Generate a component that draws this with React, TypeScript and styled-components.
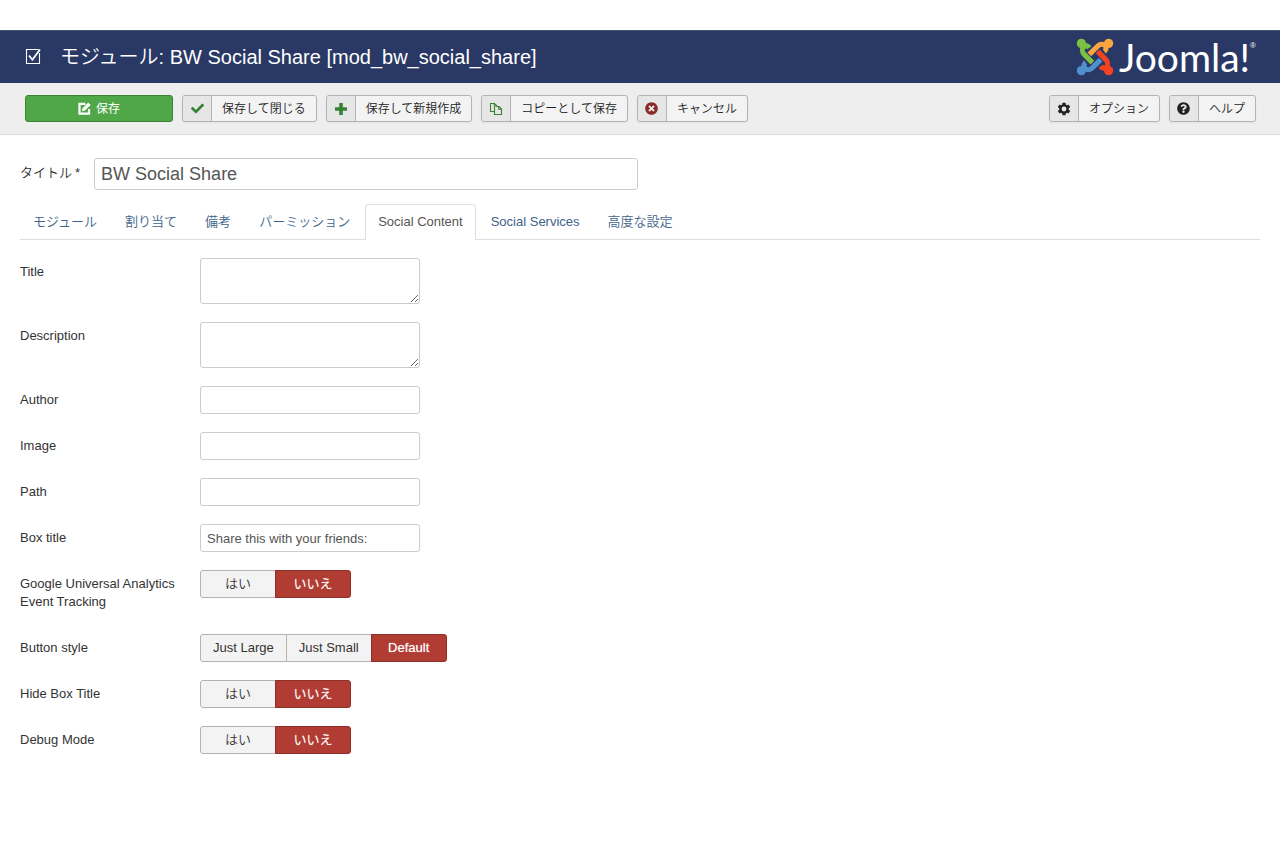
import React from "react";
import styled, { createGlobalStyle, css } from "styled-components";
import { FaCheck, FaTimesCircle, FaQuestionCircle } from "react-icons/fa";

const GlobalStyle = createGlobalStyle`
  *, *::before, *::after { box-sizing: border-box; }
  body {
    margin: 0;
    background: #fff;
    color: #333;
    font-family: "Liberation Sans", "Noto Sans CJK JP", sans-serif;
    font-size: 13px;
    font-weight: 350;
    line-height: 18px;
  }
  button, input, textarea { font: inherit; margin: 0; }
`;

const Page = styled.div`
  padding-top: 30px;
`;

const Header = styled.header`
  display: flex;
  align-items: center;
  height: 53px;
  padding: 0 24px;
  background: #293864;
  border-top: 1px solid #44516f;
  color: #fff;
`;

const PageTitle = styled.h1`
  display: flex;
  flex: 1;
  align-items: center;
  gap: 18px;
  margin: 0;
  font-size: 20px;
  font-weight: 350;
  line-height: 40px;
`;

const Brand = styled.a`
  display: flex;
  align-items: center;
  gap: 5px;
  color: #fff;
  text-decoration: none;
`;

const BrandName = styled.span`
  font-family: Lato, sans-serif;
  font-size: 39px;
  font-weight: 400;
  line-height: 40px;
`;

const Registered = styled.sup`
  align-self: flex-start;
  margin-left: -5px;
  padding-top: 5px;
  font-size: 8px;
  line-height: 8px;
`;

const Toolbar = styled.div`
  display: flex;
  gap: 9px;
  height: 52px;
  padding: 12px 24px 12px 25px;
  background: #eee;
  border-bottom: 1px solid #ddd;
`;

const Spacer = styled.div`
  flex: 1;
`;

const buttonBase = css`
  height: 27px;
  padding: 0;
  border: 1px solid #b3b3b3;
  border-radius: 3px;
  cursor: pointer;
  white-space: nowrap;
`;

const SaveButton = styled.button`
  ${buttonBase}
  display: flex;
  align-items: center;
  justify-content: center;
  gap: 5px;
  width: 148px;
  font-size: 12px;
  font-weight: 400;
  color: #fff;
  background: #4fa748;
  border-color: #3c8237;
`;

const ToolButton = styled.button`
  ${buttonBase}
  display: flex;
  background: #f3f3f3;
  color: #222;
  font-size: 12px;
  line-height: 26px;
  box-shadow: 0 1px 2px rgba(0, 0, 0, 0.05);
`;

const ToolIcon = styled.span<{ $tone: string }>`
  display: flex;
  align-items: center;
  justify-content: center;
  width: 29px;
  height: 25px;
  background: #e6e6e6;
  border-right: 1px solid #b3b3b3;
  border-radius: 3px 0 0 3px;
  color: ${(p) => p.$tone};
`;

const ToolLabel = styled.span`
  padding: 0 10px;
`;

const Main = styled.main`
  padding: 23px 20px 40px;
`;

const TitleRow = styled.div`
  display: flex;
  gap: 14px;
`;

const TitleLabel = styled.label`
  padding-top: 6px;
`;

const Star = styled.span`
  margin-left: 3px;
`;

const TextInput = styled.input`
  width: 220px;
  height: 28px;
  padding: 4px 6px;
  border: 1px solid #ccc;
  border-radius: 3px;
  background: #fff;
  color: #555;
`;

const TitleInput = styled(TextInput)`
  width: 544px;
  height: 32px;
  font-size: 18px;
`;

const TextArea = styled.textarea`
  display: block;
  width: 220px;
  height: 46px;
  padding: 4px 6px;
  border: 1px solid #ccc;
  border-radius: 3px;
  resize: both;
  color: #555;
`;

const Tabs = styled.nav`
  display: flex;
  gap: 2px;
  margin: 14px 0 18px;
  border-bottom: 1px solid #ddd;
`;

const Tab = styled.a<{ $active?: boolean }>`
  height: 36px;
  margin-bottom: -1px;
  padding: 8px 12px;
  border: 1px solid transparent;
  border-radius: 4px 4px 0 0;
  color: #3e6389;
  text-decoration: none;
  ${(p) =>
    p.$active &&
    css`
      color: #555;
      background: #fff;
      border-color: #ddd #ddd #fff;
    `}
`;

const Field = styled.div`
  display: flex;
  margin-bottom: 18px;
`;

const fieldLabel = css`
  width: 180px;
  padding: 5px 20px 5px 0;
`;

const FieldLabel = styled.label`
  ${fieldLabel}
`;

const GroupLabel = styled.div`
  ${fieldLabel}
`;

const RadioGroup = styled.div`
  display: flex;
  height: 28px;
`;

const Choice = styled.label<{ $wide: boolean }>`
  position: relative;
  min-width: ${(p) => (p.$wide ? 76 : 86)}px;
  padding: 4px 12px;
  border: 1px solid #b3b3b3;
  background: #f3f3f3;
  text-align: center;
  cursor: pointer;
  & + & { margin-left: -1px; }
  &:first-child { border-radius: 3px 0 0 3px; }
  &:last-child { border-radius: 0 3px 3px 0; }
  &:has(input:checked) {
    background: #b13c33;
    border-color: #8c2f28;
    color: #fff;
    text-shadow: 0 0 1px rgba(255, 255, 255, 0.6);
  }
`;

const HiddenRadio = styled.input`
  position: absolute;
  inset: 0;
  margin: 0;
  opacity: 0;
  cursor: pointer;
`;

const ARM = "M-11 -18C-14 -22 -19 -23 -22 -20C-26 -16 -25 -9 -21 -5L-5 11";

function JoomlaMark() {
  const arms = [
    { color: "#7ac143", turn: 0 },
    { color: "#f9a541", turn: 90 },
    { color: "#f44321", turn: 180 },
    { color: "#5091cd", turn: 270 },
  ];
  return (
    <svg width="38" height="38" viewBox="-37 -37 74 74" aria-hidden="true">
      {arms.map((arm) => (
        <g key={arm.turn} transform={`rotate(${arm.turn})`}>
          <circle cx="-26.5" cy="-26.5" r="9" fill={arm.color} />
          <path d={ARM} fill="none" stroke={arm.color} strokeWidth="10" />
        </g>
      ))}
    </svg>
  );
}

function CheckboxIcon() {
  return (
    <svg width="18" height="18" viewBox="0 0 18 18" fill="none" stroke="#fff" aria-hidden="true">
      <path d="M14.5 1.5H2.5v14h13V5" strokeWidth="1.1" />
      <path d="M5 7.5l3.4 4.3L16 1.5" strokeWidth="1.8" />
    </svg>
  );
}

function EditIcon() {
  return (
    <svg width="13" height="13" viewBox="0 0 14 14" aria-hidden="true">
      <path d="M8 2.1H1.6v10.3h10.3V7.5" fill="none" stroke="#fff" strokeWidth="2.4" />
      <path d="M4.3 9.9l.7-3.2L11 .5l2.7 2.7-6.2 6z" fill="#fff" />
    </svg>
  );
}

function PlusIcon() {
  return (
    <svg width="14" height="14" viewBox="0 0 14 14" aria-hidden="true">
      <path d="M5.2 1h3.6v4.2H13v3.6H8.8V13H5.2V8.8H1V5.2h4.2z" fill="currentColor" />
    </svg>
  );
}

function CopyIcon() {
  return (
    <svg width="14" height="14" viewBox="0 0 14 14" fill="none" stroke="currentColor" strokeWidth="1.1" aria-hidden="true">
      <path d="M5.5 9.5h-4v-8h4l2.5 2.5" />
      <path d="M5.3 1.5V4H8" />
      <path d="M5.5 4.5V12.5h7V7L10 4.5H7.5" />
      <path d="M9.7 4.5V7.2h2.8" />
    </svg>
  );
}

function GearIcon() {
  return (
    <svg width="14" height="14" viewBox="-7 -7 14 14" aria-hidden="true">
      {[0, 60, 120].map((a) => (
        <rect key={a} x="-1.6" y="-6.3" width="3.2" height="12.6" rx="0.5" fill="currentColor" transform={`rotate(${a})`} />
      ))}
      <circle r="4.8" fill="currentColor" />
      <circle r="2.4" fill="#e6e6e6" />
    </svg>
  );
}

type ToolProps = { icon: React.ReactNode; tone?: string; label: string };

function Tool({ icon, tone = "#222", label }: ToolProps) {
  return (
    <ToolButton type="button">
      <ToolIcon $tone={tone}>{icon}</ToolIcon>
      <ToolLabel>{label}</ToolLabel>
    </ToolButton>
  );
}

type RadioFieldProps = { name: string; label: string; options: string[]; value: string };

function RadioField({ name, label, options, value }: RadioFieldProps) {
  return (
    <Field>
      <GroupLabel id={`${name}-label`}>{label}</GroupLabel>
      <RadioGroup role="radiogroup" aria-labelledby={`${name}-label`}>
        {options.map((option) => (
          <Choice key={option} $wide={!option.startsWith("Just")}>
            <HiddenRadio type="radio" name={name} defaultChecked={option === value} />
            {option}
          </Choice>
        ))}
      </RadioGroup>
    </Field>
  );
}

const TABS = ["モジュール", "割り当て", "備考", "パーミッション", "Social Content", "Social Services", "高度な設定"];
const YES_NO = ["はい", "いいえ"];

const TEXT_FIELDS = [
  { id: "author", label: "Author", value: "" },
  { id: "image", label: "Image", value: "" },
  { id: "path", label: "Path", value: "" },
  { id: "box-title", label: "Box title", value: "Share this with your friends:" },
];

export default function App() {
  return (
    <Page>
      <GlobalStyle />
      <Header>
        <PageTitle>
          <CheckboxIcon />
          モジュール: BW Social Share [mod_bw_social_share]
        </PageTitle>
        <Brand href="#">
          <JoomlaMark />
          <BrandName>Joomla!</BrandName>
          <Registered>®</Registered>
        </Brand>
      </Header>
      <Toolbar>
        <SaveButton type="button">
          <EditIcon />
          保存
        </SaveButton>
        <Tool icon={<FaCheck size={13} />} tone="#378137" label="保存して閉じる" />
        <Tool icon={<PlusIcon />} tone="#378137" label="保存して新規作成" />
        <Tool icon={<CopyIcon />} tone="#378137" label="コピーとして保存" />
        <Tool icon={<FaTimesCircle size={13} />} tone="#8a2a2a" label="キャンセル" />
        <Spacer />
        <Tool icon={<GearIcon />} label="オプション" />
        <Tool icon={<FaQuestionCircle size={13} />} label="ヘルプ" />
      </Toolbar>
      <Main>
        <TitleRow>
          <TitleLabel htmlFor="title">
            タイトル<Star>*</Star>
          </TitleLabel>
          <TitleInput id="title" defaultValue="BW Social Share" />
        </TitleRow>
        <Tabs>
          {TABS.map((tab) => (
            <Tab key={tab} href="#" $active={tab === "Social Content"}>
              {tab}
            </Tab>
          ))}
        </Tabs>
        <Field>
          <FieldLabel htmlFor="og-title">Title</FieldLabel>
          <TextArea id="og-title" />
        </Field>
        <Field>
          <FieldLabel htmlFor="og-description">Description</FieldLabel>
          <TextArea id="og-description" />
        </Field>
        {TEXT_FIELDS.map((field) => (
          <Field key={field.id}>
            <FieldLabel htmlFor={field.id}>{field.label}</FieldLabel>
            <TextInput id={field.id} defaultValue={field.value} />
          </Field>
        ))}
        <RadioField name="tracking" label="Google Universal Analytics Event Tracking" options={YES_NO} value="いいえ" />
        <RadioField name="style" label="Button style" options={["Just Large", "Just Small", "Default"]} value="Default" />
        <RadioField name="hide-title" label="Hide Box Title" options={YES_NO} value="いいえ" />
        <RadioField name="debug" label="Debug Mode" options={YES_NO} value="いいえ" />
      </Main>
    </Page>
  );
}
